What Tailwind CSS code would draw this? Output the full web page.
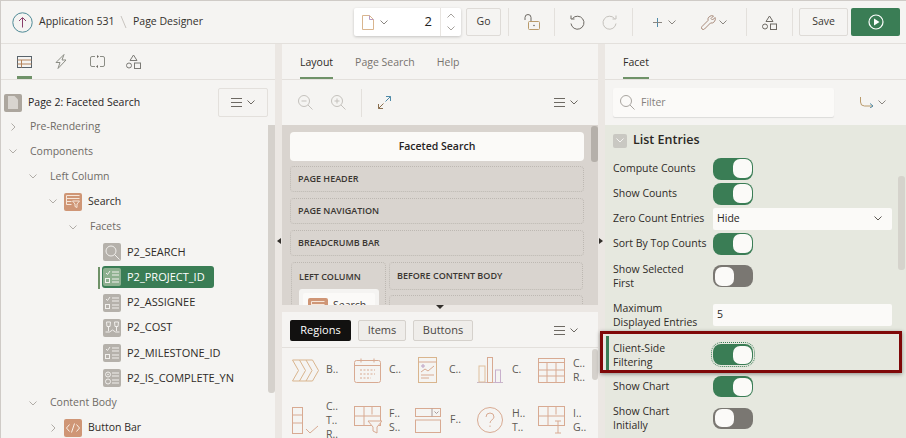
<!DOCTYPE html>
<html lang="en">
<head>
    <title>Page Designer</title>
    <script src="https://cdn.jsdelivr.net/npm/@tailwindcss/browser@4"></script>
</head>
<body class="font-['Open_Sans',sans-serif] text-[10.5px] text-[#2f2b27] bg-[#f5f4f2] overflow-hidden">
<div class="relative w-[906px] h-[438px] overflow-hidden border-t border-l border-[#cfcbc7]">

    <!-- top toolbar -->
    <header class="flex items-center h-[43px] border-b border-[#e3e0dc] whitespace-nowrap">
        <svg class="ml-[11px] w-[21px] h-[21px] shrink-0" viewBox="0 0 21 21" fill="none"><circle cx="10.5" cy="10.5" r="9.7" stroke="#4f8a96" stroke-width="1"/><path d="M10.5 15.5V6M7 9l3.500-3.500L14 9" stroke="#8a3f6b" stroke-width="1"/></svg>
        <span class="ml-[6px] w-[73px] text-[#33302c]">Application 531</span>
        <svg class="ml-[8px] w-[7px] h-[14px] shrink-0" viewBox="0 0 7 14" fill="none"><path d="M1 1l5 12" stroke="#c9c5c0"/></svg>
        <span class="ml-[6px] w-[73px] text-[#33302c]">Page Designer</span>

        <div class="ml-[148px] w-[107px] h-[28px] shrink-0 flex items-center bg-white rounded-[2px] shadow-[0_1px_3px_rgba(0,0,0,0.2)]">
            <svg class="ml-[8px] w-[12px] h-[15px]" viewBox="0 0 12 15" fill="none"><path d="M.5.5h7l4 4v10H.5z" stroke="#d9b58e"/><path d="M7.500.5v4h4" stroke="#b89ac0"/></svg>
            <svg class="ml-[6px] w-[8px] h-[5px]" viewBox="0 0 8 5" fill="none"><path d="M.5.5L4 4 7.500.5" stroke="#8a8681"/></svg>
            <span class="ml-auto mr-[8px] text-[13px] text-[#222]">2</span>
            <div class="w-[21px] h-full border-l border-[#e8e5e1] flex flex-col items-center justify-center gap-[8px]">
                <svg class="w-[8px] h-[5px]" viewBox="0 0 8 5" fill="none"><path d="M.5 4.500L4 1l3.500 3.500" stroke="#a5a19c"/></svg>
                <svg class="w-[8px] h-[5px]" viewBox="0 0 8 5" fill="none"><path d="M.5.5L4 4 7.500.5" stroke="#a5a19c"/></svg>
            </div>
        </div>
        <div class="ml-[5px] w-[35px] h-[28px] shrink-0 flex items-center justify-center border border-[#dedbd7] rounded-[2px] text-[#3b3733]">Go</div>
        <div class="ml-[7px] w-px h-[28px] bg-[#e3e0dc] shrink-0"></div>
        <svg class="ml-[15px] w-[16px] h-[17px] shrink-0" viewBox="0 0 16 17" fill="none"><path d="M1 6V3.500a3 3 0 016 0V7" stroke="#6d6963"/><rect x="4.500" y="7.500" width="11" height="8" rx="1" stroke="#b99a6b"/><circle cx="10" cy="11.500" r=".8" fill="#6d6963"/></svg>
        <div class="ml-[14px] w-px h-[28px] bg-[#e3e0dc] shrink-0"></div>
        <svg class="ml-[15px] w-[15px] h-[15px] shrink-0" viewBox="0 0 15 15" fill="none"><path d="M2.500 3.500a6.500 6.500 0 11-1.500 5" stroke="#6d6963"/><path d="M1 .5v3.500h3.500" stroke="#6d6963"/></svg>
        <svg class="ml-[17px] w-[15px] h-[15px] shrink-0" viewBox="0 0 15 15" fill="none"><path d="M12.500 3.500a6.500 6.500 0 10 1.500 5" stroke="#c4c1bc"/><path d="M14 .5v3.500h-3.500" stroke="#c4c1bc"/></svg>
        <div class="ml-[15px] w-px h-[28px] bg-[#e3e0dc] shrink-0"></div>
        <svg class="ml-[20px] w-[9px] h-[9px] shrink-0" viewBox="0 0 9 9" fill="none"><path d="M4.500 0v9" stroke="#4f8aa8"/><path d="M0 4.500h9" stroke="#8a8681"/></svg>
        <svg class="ml-[6px] w-[8px] h-[5px] shrink-0" viewBox="0 0 8 5" fill="none"><path d="M.5.5L4 4 7.500.5" stroke="#8a8681"/></svg>
        <svg class="ml-[25px] w-[15px] h-[15px] shrink-0" viewBox="0 0 15 15" fill="none"><path d="M1 11.500L7 5.500a4 4 0 015.500-4.500L10 3.500l1.500 1.500L14 2.500A4 4 0 019.500 8l-6 6a1.500 1.500 0 01-2.500-2.500z" stroke="#a88a7a"/></svg>
        <svg class="ml-[3px] w-[8px] h-[5px] shrink-0" viewBox="0 0 8 5" fill="none"><path d="M.5.5L4 4 7.500.5" stroke="#8a8681"/></svg>
        <div class="ml-[19px] w-px h-[28px] bg-[#e3e0dc] shrink-0"></div>
        <svg class="ml-[15px] w-[15px] h-[15px] shrink-0" viewBox="0 0 15 15" fill="none"><path d="M7.500 1L11 6.500H4z" stroke="#6d6963"/><circle cx="3" cy="11.500" r="2.500" stroke="#6d6963"/><rect x="8.500" y="9" width="6" height="5.500" stroke="#6d6963"/></svg>
        <div class="ml-[15px] w-px h-[28px] bg-[#e3e0dc] shrink-0"></div>
        <div class="ml-[6px] w-[49px] h-[28px] shrink-0 flex items-center justify-center border border-[#dedbd7] rounded-[2px] text-[#3b3733]">Save</div>
        <div class="ml-[3px] w-[49px] h-[28px] shrink-0 flex items-center justify-center bg-[#3a7d55] rounded-[2px]">
            <svg class="w-[16px] h-[16px]" viewBox="0 0 16 16" fill="none"><circle cx="8" cy="8" r="7" stroke="#fff" stroke-width="1.200"/><path d="M6 4.500L11.500 8 6 11.500z" fill="#fff"/></svg>
        </div>
    </header>

    <div class="flex h-[394px]">
        <!-- left panel -->
        <section class="relative w-[274px] shrink-0 flex flex-col">
            <div class="h-[36px] flex border-b border-[#e3e0dc] shrink-0">
                <div class="relative ml-[16px] w-[15px] flex items-center">
                    <svg class="w-[15px] h-[12px]" viewBox="0 0 15 12" fill="none"><rect x=".5" y=".5" width="14" height="11" stroke="#59636b"/><path d="M.5 4h14M.5 8h14M4.500 4v7.500" stroke="#b5835a"/></svg>
                    <div class="absolute left-0 right-0 bottom-0 h-[3px] bg-[#6f9268]"></div>
                </div>
                <div class="ml-[23px] flex items-center">
                    <svg class="w-[12px] h-[15px]" viewBox="0 0 12 15" fill="none"><path d="M9 .5L1 8.500h4l-2 6L11 6H7z" stroke="#8b8d85"/></svg>
                </div>
                <div class="ml-[23px] flex items-center">
                    <svg class="w-[15px] h-[13px]" viewBox="0 0 15 13" fill="none"><path d="M5 1.500H2a1.500 1.500 0 00-1.500 1.500v7A1.500 1.500 0 002 11.500h3M10 1.500h3a1.500 1.500 0 011.500 1.500v7a1.500 1.500 0 01-1.500 1.500h-3" stroke="#8b8d85"/><path d="M7 0v3l2-1.500zM8 10v3l-2-1.500z" fill="#6d6963"/></svg>
                </div>
                <div class="ml-[21px] flex items-center">
                    <svg class="w-[15px] h-[15px]" viewBox="0 0 15 15" fill="none"><path d="M7.500 1L11 6.500H4z" stroke="#7b7a76"/><circle cx="3" cy="11.500" r="2.500" stroke="#7b7a76"/><rect x="8.500" y="9" width="6" height="5.500" stroke="#7b7a76"/></svg>
                </div>
            </div>
            <div class="h-[29px] flex items-center shrink-0 mt-[8px]">
                <div class="ml-[3px] w-[18px] h-[18px] rounded-[2px] bg-[#aca69e] flex items-center justify-center">
                    <svg class="w-[10px] h-[13px]" viewBox="0 0 10 13"><path d="M0 0h6.500L10 3.500V13H0z" fill="#d8d4cf"/></svg>
                </div>
                <span class="ml-[6px] text-[#26231f]">Page 2: Faceted Search</span>
                <div class="ml-auto mr-[7px] w-[50px] h-[29px] border border-[#e3e0dc] rounded-[2px] flex items-center justify-center gap-[5px]">
                    <svg class="w-[11px] h-[9px]" viewBox="0 0 11 9"><path d="M0 .5h11M0 4.500h11M0 8.500h11" stroke="#6d6963"/></svg>
                    <svg class="w-[8px] h-[5px]" viewBox="0 0 8 5" fill="none"><path d="M.5.5L4 4 7.500.5" stroke="#6d6963"/></svg>
                </div>
            </div>
            <ul class="relative -mt-[3px]">
                <li class="h-[25.15px] flex items-center pl-[10px] text-[#6f6b66]">
                    <svg class="w-[5px] h-[8px]" viewBox="0 0 5 8" fill="none"><path d="M.5.5L4 4 .5 7.500" stroke="#b0aca7"/></svg>
                    <span class="ml-[14px]">Pre-Rendering</span>
                </li>
                <li class="h-[25.15px] flex items-center pl-[8px] text-[#6f6b66]">
                    <svg class="w-[8px] h-[5px]" viewBox="0 0 8 5" fill="none"><path d="M.5.5L4 4 7.500.5" stroke="#b0aca7"/></svg>
                    <span class="ml-[13px]">Components</span>
                </li>
                <li class="h-[25.15px] flex items-center pl-[28px] text-[#6f6b66]">
                    <svg class="w-[8px] h-[5px]" viewBox="0 0 8 5" fill="none"><path d="M.5.5L4 4 7.500.5" stroke="#b0aca7"/></svg>
                    <span class="ml-[13px]">Left Column</span>
                </li>
                <li class="h-[25.15px] flex items-center pl-[48px] text-[#2f2b27]">
                    <svg class="w-[8px] h-[5px]" viewBox="0 0 8 5" fill="none"><path d="M.5.5L4 4 7.500.5" stroke="#b0aca7"/></svg>
                    <div class="ml-[7px] w-[18px] h-[18px] rounded-[2px] bg-[#cf9676] flex items-center justify-center">
                        <svg class="w-[14px] h-[13px]" viewBox="0 0 14 13" fill="none"><path d="M.5.500h13M.5 3.500h13M.5 6.500h5M.5 9.500h5M.5.500v9" stroke="#f6e6d9"/><path d="M6.500 6h7L11 9v3.500l-2-1V9z" stroke="#f6e6d9"/></svg>
                    </div>
                    <span class="ml-[6px]">Search</span>
                </li>
                <li class="h-[25.15px] flex items-center pl-[68px] text-[#6f6b66]">
                    <svg class="w-[8px] h-[5px]" viewBox="0 0 8 5" fill="none"><path d="M.5.5L4 4 7.500.5" stroke="#b0aca7"/></svg>
                    <span class="ml-[13px]">Facets</span>
                </li>
                <li class="h-[25.15px] flex items-center pl-[102px] text-[11px] text-[#2f2b27]">
                    <div class="w-[18px] h-[18px] rounded-[2px] bg-[#b5b1ab] flex items-center justify-center">
                        <svg class="w-[15px] h-[15px]" viewBox="0 0 15 15" fill="none"><circle cx="6" cy="6" r="5" stroke="#f1efec"/><path d="M9.500 9.500l5 5" stroke="#f1efec"/></svg>
                    </div>
                    <span class="ml-[6px]">P2_SEARCH</span>
                </li>
                <li class="relative h-[25.15px] flex items-center pl-[102px] text-[11px] text-white">
                    <div class="absolute left-[97px] top-[2px] w-[2px] h-[22px] bg-[#6f9268]"></div>
                    <div class="flex items-center w-[112px] h-[22px] -ml-[1px] pl-[1px] rounded-[3px] bg-[#3a7d55]">
                        <div class="w-[18px] h-[18px] rounded-[2px] bg-[#8db08f] flex items-center justify-center">
                            <svg class="w-[14px] h-[14px]" viewBox="0 0 14 14" fill="none"><path d="M1 3l1.500 1.500L5 1M7 2h7M7 5h7M7 9h7M7 12h7" stroke="#f1efec"/><rect x=".5" y="8.500" width="4" height="4" stroke="#f1efec"/></svg>
                        </div>
                        <span class="ml-[6px]">P2_PROJECT_ID</span>
                    </div>
                </li>
                <li class="h-[25.15px] flex items-center pl-[102px] text-[11px] text-[#2f2b27]">
                    <div class="w-[18px] h-[18px] rounded-[2px] bg-[#b5b1ab] flex items-center justify-center">
                        <svg class="w-[14px] h-[14px]" viewBox="0 0 14 14" fill="none"><path d="M1 3l1.500 1.500L5 1M7 2h7M7 5h7M7 9h7M7 12h7" stroke="#f1efec"/><rect x=".5" y="8.500" width="4" height="4" stroke="#f1efec"/></svg>
                    </div>
                    <span class="ml-[6px]">P2_ASSIGNEE</span>
                </li>
                <li class="h-[25.15px] flex items-center pl-[102px] text-[11px] text-[#2f2b27]">
                    <div class="w-[18px] h-[18px] rounded-[2px] bg-[#b5b1ab] flex items-center justify-center">
                        <svg class="w-[15px] h-[14px]" viewBox="0 0 15 14" fill="none"><path d="M1.500 1h4L5 5.500H2zM9.500 1h4L13 5.500h-3zM3.500 5.500V10M11.500 5.500V10M.5 11h4l3-2 3 2h4" stroke="#f1efec"/></svg>
                    </div>
                    <span class="ml-[6px]">P2_COST</span>
                </li>
                <li class="h-[25.15px] flex items-center pl-[102px] text-[11px] text-[#2f2b27]">
                    <div class="w-[18px] h-[18px] rounded-[2px] bg-[#b5b1ab] flex items-center justify-center">
                        <svg class="w-[14px] h-[14px]" viewBox="0 0 14 14" fill="none"><path d="M1 3l1.500 1.500L5 1M7 2h7M7 5h7M7 9h7M7 12h7" stroke="#f1efec"/><rect x=".5" y="8.500" width="4" height="4" stroke="#f1efec"/></svg>
                    </div>
                    <span class="ml-[6px]">P2_MILESTONE_ID</span>
                </li>
                <li class="h-[25.15px] flex items-center pl-[102px] text-[11px] text-[#2f2b27]">
                    <div class="w-[18px] h-[18px] rounded-[2px] bg-[#b5b1ab] flex items-center justify-center">
                        <svg class="w-[14px] h-[14px]" viewBox="0 0 14 14" fill="none"><circle cx="3" cy="3.500" r="2.500" stroke="#f1efec"/><circle cx="3" cy="10.500" r="2.500" stroke="#f1efec"/><circle cx="3" cy="3.500" r=".8" fill="#f1efec"/><path d="M7 2h7M7 5h7M7 9h7M7 12h7" stroke="#f1efec"/></svg>
                    </div>
                    <span class="ml-[6px]">P2_IS_COMPLETE_YN</span>
                </li>
                <li class="h-[25.15px] flex items-center pl-[28px] text-[#6f6b66]">
                    <svg class="w-[8px] h-[5px]" viewBox="0 0 8 5" fill="none"><path d="M.5.5L4 4 7.500.5" stroke="#b0aca7"/></svg>
                    <span class="ml-[13px]">Content Body</span>
                </li>
                <li class="h-[25.15px] flex items-center pl-[50px] text-[#2f2b27]">
                    <svg class="w-[5px] h-[8px]" viewBox="0 0 5 8" fill="none"><path d="M.5.5L4 4 .5 7.500" stroke="#b0aca7"/></svg>
                    <div class="ml-[8px] w-[18px] h-[18px] rounded-[2px] bg-[#cf9676] flex items-center justify-center">
                        <svg class="w-[14px] h-[10px]" viewBox="0 0 14 10" fill="none"><path d="M3.500 1.500L.5 5l3 3.500M10.500 1.500l3 3.500-3 3.500M8.500.5l-3 9" stroke="#fbf1e8"/></svg>
                    </div>
                    <span class="ml-[6px]">Button Bar</span>
                </li>
            </ul>
            <div class="absolute left-[267px] top-[81px] w-[7px] h-[268px] rounded-b-[3px] bg-[#d5d1cc]"></div>
        </section>

        <!-- left gutter -->
        <div class="relative w-[7px] shrink-0 bg-[#ebe7e3] flex items-center">
            <div class="ml-[2px] w-0 h-0 border-y-[3px] border-r-[4px] border-y-transparent border-r-[#33302c]"></div>
        </div>

        <!-- center panel -->
        <section class="relative w-[316px] shrink-0 flex flex-col">
            <div class="h-[36px] flex border-b border-[#e3e0dc] shrink-0 pl-[18px]">
                <div class="relative h-full flex items-center pt-[2px] text-[#2f2b27]">Layout
                    <div class="absolute left-0 right-0 bottom-0 h-[2px] bg-[#6f9268]"></div>
                </div>
                <div class="ml-[22px] flex items-center pt-[2px] text-[#77736e]">Page Search</div>
                <div class="ml-[22px] flex items-center pt-[2px] text-[#77736e]">Help</div>
            </div>
            <div class="h-[45px] flex items-center shrink-0 pl-[16px]">
                <svg class="w-[15px] h-[15px]" viewBox="0 0 15 15" fill="none"><circle cx="6" cy="6" r="5.500" stroke="#c4c1bc"/><path d="M3.500 6h5M10 10l4.500 4.500" stroke="#c4c1bc"/></svg>
                <svg class="ml-[18px] w-[15px] h-[15px]" viewBox="0 0 15 15" fill="none"><circle cx="6" cy="6" r="5.500" stroke="#c4c1bc"/><path d="M3.500 6h5M6 3.500v5M10 10l4.500 4.500" stroke="#c4c1bc"/></svg>
                <div class="ml-[15px] w-px h-[28px] bg-[#e3e0dc]"></div>
                <svg class="ml-[16px] w-[13px] h-[13px]" viewBox="0 0 13 13" fill="none"><path d="M8 .5h4.500V5M12.500.5L7.500 5.500" stroke="#4f8aa8"/><path d="M5 12.500H.5V8M.5 12.500l5-5" stroke="#8a6f4f"/></svg>
                <div class="ml-auto mr-[20px] flex items-center gap-[5px]">
                    <svg class="w-[11px] h-[9px]" viewBox="0 0 11 9"><path d="M0 .5h11M0 4.500h11M0 8.500h11" stroke="#6d6963"/></svg>
                    <svg class="w-[8px] h-[5px]" viewBox="0 0 8 5" fill="none"><path d="M.5.5L4 4 7.500.5" stroke="#6d6963"/></svg>
                </div>
            </div>
            <div class="relative h-[180px] shrink-0 overflow-hidden bg-[#d9d4cf] px-[8px] pt-[7px]">
                <div class="w-[294px] h-[29px] flex items-center justify-center rounded-[4px] bg-[#fbfaf8] font-semibold text-[#26231f]">Faceted Search</div>
                <div class="mt-[5px] w-[294px] h-[26px] flex items-center pl-[7px] rounded-[4px] border border-dotted border-[#bdb8b2] text-[9px] font-semibold text-[#3a3632]">PAGE HEADER</div>
                <div class="mt-[6px] w-[294px] h-[26px] flex items-center pl-[7px] rounded-[4px] border border-dotted border-[#bdb8b2] text-[9px] font-semibold text-[#3a3632]">PAGE NAVIGATION</div>
                <div class="mt-[6px] w-[294px] h-[26px] flex items-center pl-[7px] rounded-[4px] border border-dotted border-[#bdb8b2] text-[9px] font-semibold text-[#3a3632]">BREADCRUMB BAR</div>
                <div class="mt-[6px] flex gap-[3px] ml-[1px]">
                    <div class="w-[95px] h-[60px] rounded-[4px] border border-dotted border-[#bdb8b2] pl-[7px] pt-[7px] text-[9px] font-semibold text-[#3a3632]">LEFT COLUMN
                        <div class="mt-[5px] w-[80px] h-[30px] rounded-[3px] bg-[#f5f4f2] p-[4px]">
                            <div class="flex items-start h-full rounded-[2px] bg-[#fbfaf8] pl-[5px] pt-[5px]">
                                <div class="w-[20px] h-[20px] rounded-[2px] bg-[#cf9676] flex items-center justify-center">
                                    <svg class="w-[14px] h-[13px]" viewBox="0 0 14 13" fill="none"><path d="M.5.500h13M.5 3.500h13M.5 6.500h13M.5.500v9" stroke="#f6e6d9"/></svg>
                                </div>
                                <span class="ml-[5px] text-[10.5px] font-normal">Search</span>
                            </div>
                        </div>
                    </div>
                    <div class="flex flex-col gap-[5px]">
                        <div class="w-[194px] h-[28px] flex items-center pl-[7px] rounded-[4px] border border-dotted border-[#bdb8b2] text-[9px] font-semibold text-[#3a3632]">BEFORE CONTENT BODY</div>
                        <div class="w-[194px] h-[28px] rounded-[4px] border border-dotted border-[#bdb8b2]"></div>
                    </div>
                </div>
                <div class="absolute left-[309px] top-[1px] w-[7px] h-[36px] rounded-[3px] bg-[#b5b0aa]"></div>
            </div>
            <div class="h-[7px] shrink-0 bg-[#ebe7e3] flex justify-center">
                <div class="w-0 h-0 border-x-[4px] border-t-[4px] border-x-transparent border-t-[#33302c]"></div>
            </div>
            <div class="h-[36px] flex items-center pl-[8px] pt-[1px] border-b border-[#e3e0dc] shrink-0 text-[11px]">
                <div class="w-[61px] h-[21px] flex items-center justify-center rounded-[2px] bg-[#121110] text-white font-medium">Regions</div>
                <div class="ml-[7px] w-[48px] h-[21px] flex items-center justify-center rounded-[2px] border border-[#d5d1cc] bg-[#efedea] text-[#4a4642]">Items</div>
                <div class="ml-[7px] w-[60px] h-[21px] flex items-center justify-center rounded-[2px] border border-[#d5d1cc] bg-[#efedea] text-[#4a4642]">Buttons</div>
                <div class="ml-auto mr-[20px] flex items-center gap-[5px]">
                    <svg class="w-[11px] h-[9px]" viewBox="0 0 11 9"><path d="M0 .5h11M0 4.500h11M0 8.500h11" stroke="#6d6963"/></svg>
                    <svg class="w-[8px] h-[5px]" viewBox="0 0 8 5" fill="none"><path d="M.5.5L4 4 7.500.5" stroke="#6d6963"/></svg>
                </div>
            </div>
            <!-- region gallery -->
            <div class="relative flex-1 overflow-hidden">
                <div class="grid grid-cols-[62px_62px_62px_62px_62px] ml-[10px] -mt-[3px]">
                    <div class="h-[50px] flex items-center gap-[7px] text-[#5d5954]">
                        <svg class="w-[27px] h-[23px]" viewBox="0 0 27 23" fill="none"><path d="M.5 1h20l6 10.500-6 10.500H.5l6-10.500zM7.500 1l6 10.500-6 10.500M14 1l6 10.500L14 22" stroke="#d9b58e"/></svg>
                        <span>B..</span>
                    </div>
                    <div class="h-[50px] flex items-center gap-[8px] text-[#5d5954]">
                        <svg class="w-[27px] h-[25px]" viewBox="0 0 27 25" fill="none"><rect x=".5" y="2.500" width="26" height="22" rx="2" stroke="#d8aa92"/><path d="M.5 7.500h26M7 .5v4M20 .5v4" stroke="#d8aa92"/><path d="M6 12h15M6 16h15M6 20h11" stroke="#d8aa92" stroke-dasharray="2 1.500"/></svg>
                        <span>C..</span>
                    </div>
                    <div class="h-[50px] flex items-center gap-[12px] text-[#5d5954] pl-[2px]">
                        <svg class="w-[19px] h-[26px]" viewBox="0 0 19 26" fill="none"><rect x=".5" y=".5" width="18" height="25" stroke="#d9b58e"/><path d="M.5 5h18M3 15l4-3 3 2 6-5M3 18h13M3 21h8" stroke="#d8aa92"/><circle cx="5" cy="9" r="1.200" stroke="#b89ac0"/></svg>
                        <span>C..</span>
                    </div>
                    <div class="h-[50px] flex items-center gap-[9px] text-[#5d5954] -ml-[1px]">
                        <svg class="w-[26px] h-[26px]" viewBox="0 0 26 26" fill="none"><path d="M0 25.500h26" stroke="#c9b8c8"/><rect x="2" y="9" width="6" height="16" stroke="#e0bf9d"/><rect x="10.500" y=".5" width="5" height="25" stroke="#d8aa92"/><rect x="18.500" y="13" width="5" height="12.500" stroke="#c8b0cc"/></svg>
                        <span>C.</span>
                    </div>
                    <div class="h-[50px] flex items-center gap-[8px] text-[#5d5954] -ml-[2px]">
                        <svg class="w-[27px] h-[25px]" viewBox="0 0 27 25" fill="none"><rect x=".5" y=".5" width="26" height="24" stroke="#d8aa92"/><path d="M.5 4.500h26M.5 12h26M.5 18h26M9 4.500v20M18 4.500v20" stroke="#d8aa92"/></svg>
                        <span class="leading-[14px]">C..<br>R..</span>
                    </div>
                    <div class="h-[50px] flex items-center gap-[7px] text-[#5d5954]">
                        <svg class="w-[27px] h-[27px]" viewBox="0 0 27 27" fill="none"><rect x=".5" y=".5" width="10" height="26" stroke="#d8aa92"/><path d="M.5 8h10M.5 16h10" stroke="#d8aa92"/><path d="M14 22l4 4 8-7" stroke="#d8aa92"/></svg>
                        <span class="leading-[14px]">C..<br>T..<br>R..</span>
                    </div>
                    <div class="h-[50px] flex items-center gap-[7px] text-[#5d5954]">
                        <svg class="w-[28px] h-[28px]" viewBox="0 0 28 28" fill="none"><rect x=".5" y=".5" width="26" height="19" stroke="#d8aa92"/><path d="M.5 10h26M10 .5v19M18 .5v8" stroke="#d8aa92"/><path d="M14 15h14l-5 6v6l-4-2v-4z" fill="#f5f4f2" stroke="#d8aa92"/></svg>
                        <span class="leading-[14px]">F..<br>S..</span>
                    </div>
                    <div class="h-[50px] flex items-center gap-[9px] text-[#5d5954] -ml-[1px]">
                        <svg class="w-[26px] h-[25px]" viewBox="0 0 26 25" fill="none"><rect x=".5" y=".5" width="25" height="8" stroke="#d8aa92"/><path d="M17 .5v8M19.500 3.500l2 2 2-2" stroke="#a89a9a"/><rect x=".5" y="12" width="25" height="12.500" stroke="#d8aa92"/></svg>
                        <span>F..</span>
                    </div>
                    <div class="h-[50px] flex items-center gap-[9px] text-[#5d5954] -ml-[1px]">
                        <svg class="w-[26px] h-[26px]" viewBox="0 0 26 26" fill="none"><circle cx="13" cy="13" r="12.500" stroke="#d8aa92"/><path d="M9 10a4 4 0 118 0c0 2.500-4 3-4 6" stroke="#d8aa92"/><path d="M13 18.500v1.500" stroke="#d8aa92"/></svg>
                        <span class="leading-[14px]">H..<br>T..</span>
                    </div>
                    <div class="h-[50px] flex items-center gap-[8px] text-[#5d5954] -ml-[2px]">
                        <svg class="w-[27px] h-[28px]" viewBox="0 0 27 28" fill="none"><rect x=".5" y=".5" width="26" height="19" stroke="#d8aa92"/><path d="M.5 10h26M10 .5v19M18 .5v8" stroke="#d8aa92"/><path d="M17 15h6M17 27h6M20 15v12" fill="none" stroke="#d8aa92"/></svg>
                        <span class="leading-[14px]">I..<br>G..</span>
                    </div>
                </div>
                <div class="absolute left-[310px] top-[1px] w-[6px] h-[31px] rounded-[3px] bg-[#d5d1cc]"></div>
            </div>
        </section>

        <!-- right gutter -->
        <div class="relative w-[7px] shrink-0 bg-[#ebe7e3] flex items-center">
            <div class="ml-[1px] w-0 h-0 border-y-[3px] border-l-[4px] border-y-transparent border-l-[#33302c]"></div>
        </div>

        <!-- right panel -->
        <section class="relative flex-1 flex flex-col">
            <div class="h-[36px] flex border-b border-[#e3e0dc] shrink-0 pl-[18px]">
                <div class="relative h-full flex items-center pt-[2px] text-[#2f2b27]">Facet
                    <div class="absolute left-0 right-0 bottom-0 h-[2px] bg-[#6f9268]"></div>
                </div>
            </div>
            <div class="h-[45px] flex items-center shrink-0 pl-[8px]">
                <div class="w-[221px] h-[29px] flex items-center bg-[#fbfaf8] rounded-[2px] shadow-[0_1px_1px_rgba(0,0,0,0.1)] pl-[7px]">
                    <svg class="w-[15px] h-[15px]" viewBox="0 0 15 15" fill="none"><circle cx="6" cy="6" r="5.500" stroke="#a8a49f"/><path d="M10 10l4.500 4.500" stroke="#a8a49f"/></svg>
                    <span class="ml-[6px] text-[#85817c]">Filter</span>
                </div>
                <svg class="ml-[26px] w-[14px] h-[11px]" viewBox="0 0 14 11" fill="none"><path d="M.5 0v5A4 4 0 004.500 9H13" stroke="#b99a6b"/><path d="M10 6.500L13 9l-3 2" stroke="#4f8aa8"/></svg>
                <svg class="ml-[4px] w-[8px] h-[5px]" viewBox="0 0 8 5" fill="none"><path d="M.5.5L4 4 7.500.5" stroke="#8a8681"/></svg>
            </div>
            <div class="flex-1 bg-[#e6e8df] pl-[8px]">
                <div class="h-[31px] flex items-center">
                    <div class="w-[14px] h-[14px] rounded-[2px] bg-[#c9c8c2] flex items-center justify-center">
                        <svg class="w-[8px] h-[5px]" viewBox="0 0 8 5" fill="none"><path d="M.5.5L4 4 7.500.5" stroke="#f5f4f2"/></svg>
                    </div>
                    <span class="ml-[6px] text-[12.5px] font-semibold text-[#2a2723]">List Entries</span>
                </div>
                <div class="h-[25px] flex items-center">
                    <label class="w-[100px]">Compute Counts</label>
                    <div class="w-[40px] h-[22px] rounded-[8px] bg-[#3a7d55] flex items-center justify-end pr-[1.5px]"><div class="w-[19px] h-[19px] rounded-[7px] bg-[#fbfaf8]"></div></div>
                </div>
                <div class="h-[25px] flex items-center">
                    <label class="w-[100px]">Show Counts</label>
                    <div class="w-[40px] h-[22px] rounded-[8px] bg-[#3a7d55] flex items-center justify-end pr-[1.5px]"><div class="w-[19px] h-[19px] rounded-[7px] bg-[#fbfaf8]"></div></div>
                </div>
                <div class="h-[25px] flex items-center">
                    <label class="w-[100px]">Zero Count Entries</label>
                    <div class="w-[179px] h-[22px] rounded-[2px] bg-[#fbfaf8] flex items-center pl-[4px] pr-[10px] justify-between text-[#2a2723]">Hide
                        <svg class="w-[8px] h-[5px]" viewBox="0 0 8 5" fill="none"><path d="M.5.5L4 4 7.500.5" stroke="#5d5954"/></svg>
                    </div>
                </div>
                <div class="h-[25px] flex items-center">
                    <label class="w-[100px]">Sort By Top Counts</label>
                    <div class="w-[40px] h-[22px] rounded-[8px] bg-[#3a7d55] flex items-center justify-end pr-[1.5px]"><div class="w-[19px] h-[19px] rounded-[7px] bg-[#fbfaf8]"></div></div>
                </div>
                <div class="h-[40px] flex items-center">
                    <label class="w-[100px] leading-[14px]">Show Selected<br>First</label>
                    <div class="w-[40px] h-[22px] rounded-[8px] bg-[#7a7772] flex items-center pl-[1.5px]"><div class="w-[19px] h-[19px] rounded-[7px] bg-[#fbfaf8]"></div></div>
                </div>
                <div class="h-[38px] flex items-center">
                    <label class="w-[100px] leading-[14px]">Maximum<br>Displayed Entries</label>
                    <div class="w-[179px] h-[22px] rounded-[2px] bg-[#fbfaf8] flex items-center pl-[4px] text-[#2a2723]">5</div>
                </div>
                <div class="relative h-[41px] flex items-center">
                    <div class="absolute -left-[7px] top-[2px] w-[3px] h-[36px] bg-[#3a7d55]"></div>
                    <label class="w-[100px] leading-[14px]">Client-Side<br>Filtering</label>
                    <div class="w-[40px] h-[21px] rounded-[8px] bg-[#3a7d55] flex items-center justify-end pr-[1.5px] outline outline-dotted outline-[#3a7d55] outline-offset-[1px]"><div class="w-[19px] h-[18px] rounded-[7px] bg-[#fbfaf8]"></div></div>
                </div>
                <div class="h-[23px] flex items-center">
                    <label class="w-[100px]">Show Chart</label>
                    <div class="w-[40px] h-[21px] rounded-[8px] bg-[#3a7d55] flex items-center justify-end pr-[1.5px]"><div class="w-[19px] h-[18px] rounded-[7px] bg-[#fbfaf8]"></div></div>
                </div>
                <div class="h-[40px] flex items-center">
                    <label class="w-[100px] leading-[14px]">Show Chart<br>Initially</label>
                    <div class="w-[40px] h-[21px] rounded-[8px] bg-[#7a7772] flex items-center pl-[1.5px]"><div class="w-[19px] h-[18px] rounded-[7px] bg-[#fbfaf8]"></div></div>
                </div>
            </div>
            <div class="absolute left-[293px] top-[132px] w-[7px] h-[94px] rounded-[3px] bg-[#d5d3cc]"></div>
            <div class="absolute -left-[5px] top-[287px] w-[302px] h-[42px] border-[3px] border-[#7f0808] shadow-[0_1px_4px_rgba(0,0,0,0.4)]"></div>
        </section>
    </div>
</div>
</body>
</html>
